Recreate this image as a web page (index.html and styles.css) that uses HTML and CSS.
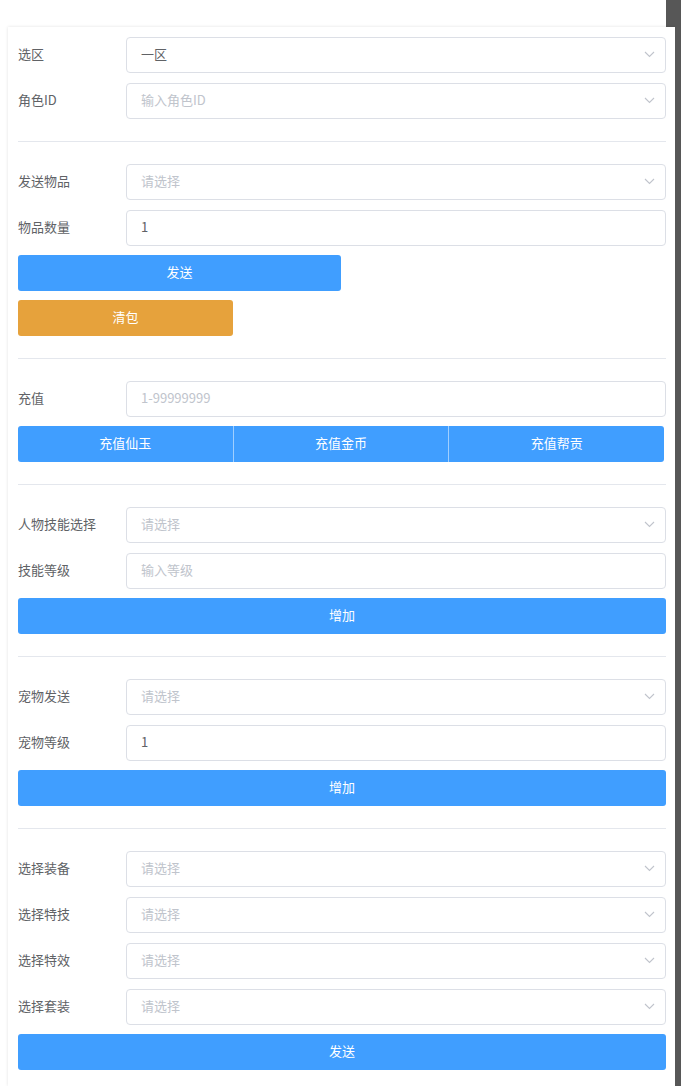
FILE: index.html
```html
<!DOCTYPE html>
<html lang="zh">
<head>
<meta charset="utf-8">
<title>GM</title>
<link rel="stylesheet" href="styles.css">
</head>
<body>
<div class="topbar"><div class="topbar-block"></div></div>
<div class="layout">
  <div class="card">
    <section class="section">
      <div class="row"><label class="label">选区</label><div class="field select"><span class="value">一区</span><svg class="chev" width="11" height="7" viewBox="0 0 11 7"><path d="M1 1 L5.5 5.5 L10 1" fill="none" stroke="#c0c4cc" stroke-width="1.1"/></svg></div></div>
      <div class="row"><label class="label">角色ID</label><div class="field select"><span class="ph">输入角色ID</span><svg class="chev" width="11" height="7" viewBox="0 0 11 7"><path d="M1 1 L5.5 5.5 L10 1" fill="none" stroke="#c0c4cc" stroke-width="1.1"/></svg></div></div>
    </section>
    <hr class="divider">
    <section class="section">
      <div class="row"><label class="label">发送物品</label><div class="field select"><span class="ph">请选择</span><svg class="chev" width="11" height="7" viewBox="0 0 11 7"><path d="M1 1 L5.5 5.5 L10 1" fill="none" stroke="#c0c4cc" stroke-width="1.1"/></svg></div></div>
      <div class="row"><label class="label">物品数量</label><div class="field"><span class="value">1</span></div></div>
      <button class="btn btn-blue w-send">发送</button>
      <button class="btn btn-orange w-clear">清包</button>
    </section>
    <hr class="divider">
    <section class="section">
      <div class="row"><label class="label">充值</label><div class="field"><span class="ph">1-99999999</span></div></div>
      <div class="btn-group">
        <button class="btn btn-blue grp">充值仙玉</button>
        <button class="btn btn-blue grp">充值金币</button>
        <button class="btn btn-blue grp">充值帮贡</button>
      </div>
    </section>
    <hr class="divider">
    <section class="section">
      <div class="row"><label class="label">人物技能选择</label><div class="field select"><span class="ph">请选择</span><svg class="chev" width="11" height="7" viewBox="0 0 11 7"><path d="M1 1 L5.5 5.5 L10 1" fill="none" stroke="#c0c4cc" stroke-width="1.1"/></svg></div></div>
      <div class="row"><label class="label">技能等级</label><div class="field"><span class="ph">输入等级</span></div></div>
      <button class="btn btn-blue w-full">增加</button>
    </section>
    <hr class="divider">
    <section class="section">
      <div class="row"><label class="label">宠物发送</label><div class="field select"><span class="ph">请选择</span><svg class="chev" width="11" height="7" viewBox="0 0 11 7"><path d="M1 1 L5.5 5.5 L10 1" fill="none" stroke="#c0c4cc" stroke-width="1.1"/></svg></div></div>
      <div class="row"><label class="label">宠物等级</label><div class="field"><span class="value">1</span></div></div>
      <button class="btn btn-blue w-full">增加</button>
    </section>
    <hr class="divider">
    <section class="section">
      <div class="row"><label class="label">选择装备</label><div class="field select"><span class="ph">请选择</span><svg class="chev" width="11" height="7" viewBox="0 0 11 7"><path d="M1 1 L5.5 5.5 L10 1" fill="none" stroke="#c0c4cc" stroke-width="1.1"/></svg></div></div>
      <div class="row"><label class="label">选择特技</label><div class="field select"><span class="ph">请选择</span><svg class="chev" width="11" height="7" viewBox="0 0 11 7"><path d="M1 1 L5.5 5.5 L10 1" fill="none" stroke="#c0c4cc" stroke-width="1.1"/></svg></div></div>
      <div class="row"><label class="label">选择特效</label><div class="field select"><span class="ph">请选择</span><svg class="chev" width="11" height="7" viewBox="0 0 11 7"><path d="M1 1 L5.5 5.5 L10 1" fill="none" stroke="#c0c4cc" stroke-width="1.1"/></svg></div></div>
      <div class="row"><label class="label">选择套装</label><div class="field select"><span class="ph">请选择</span><svg class="chev" width="11" height="7" viewBox="0 0 11 7"><path d="M1 1 L5.5 5.5 L10 1" fill="none" stroke="#c0c4cc" stroke-width="1.1"/></svg></div></div>
      <button class="btn btn-blue w-full">发送</button>
    </section>
  </div>
  <div class="strip"></div>
</div>
</body>
</html>
```

FILE: styles.css
```css
* { box-sizing: border-box; }
html, body { margin: 0; padding: 0; }
body {
  width: 681px;
  height: 1086px;
  overflow: hidden;
  background: #ffffff;
  font-family: "Noto Sans CJK SC", "Liberation Sans", sans-serif;
  font-size: 13px;
  color: #606266;
}
.topbar {
  height: 27px;
  display: flex;
  justify-content: flex-end;
}
.topbar-block {
  width: 15px;
  height: 27px;
  background: #575757;
}
.layout {
  display: flex;
  height: 1059px;
}
.card {
  flex: 1;
  margin-left: 8px;
  padding: 10px 9px 20px 10px;
  background: #fff;
  box-shadow: 0 0 3px rgba(0, 0, 0, 0.12);
}
.strip {
  width: 6px;
  background: #575757;
}
.section {
  display: flex;
  flex-direction: column;
  align-items: flex-start;
}
.row {
  display: flex;
  align-items: center;
  width: 100%;
  height: 36px;
}
.row + .row { margin-top: 10px; }
.section > .btn,
.section > .btn-group { margin-top: 9px; }
.label {
  width: 108px;
  flex: none;
  color: #606266;
  padding-bottom: 3px;
}
.field {
  flex: 1;
  height: 36px;
  border: 1px solid #dcdfe6;
  border-radius: 4px;
  padding: 0 10px 3px 14px;
  display: flex;
  align-items: center;
  justify-content: space-between;
  background: #fff;
}
.value { color: #606266; }
.ph { color: #c0c4cc; }
.chev { flex: none; margin-top: 2px; }
.divider {
  border: 0;
  border-top: 1px solid #e4e7ed;
  margin: 22px 0 22px 0;
  height: 0;
}
.btn {
  height: 36px;
  border: 0;
  border-radius: 3px;
  color: #fff;
  font-family: inherit;
  font-size: 13px;
  padding: 0 0 3px 0;
  cursor: pointer;
}
.btn-blue { background: #409eff; }
.btn-orange { background: #e6a23c; }
.w-send { width: 323px; }
.w-clear { width: 215px; }
.w-full { width: 100%; }
.btn-group {
  display: flex;
  width: 646px;
}
.grp {
  flex: 1;
  border-radius: 0;
  border-left: 1px solid rgba(255, 255, 255, 0.5);
}
.grp:first-child {
  border-left: 0;
  border-radius: 3px 0 0 3px;
}
.grp:last-child {
  border-radius: 0 3px 3px 0;
}
```
